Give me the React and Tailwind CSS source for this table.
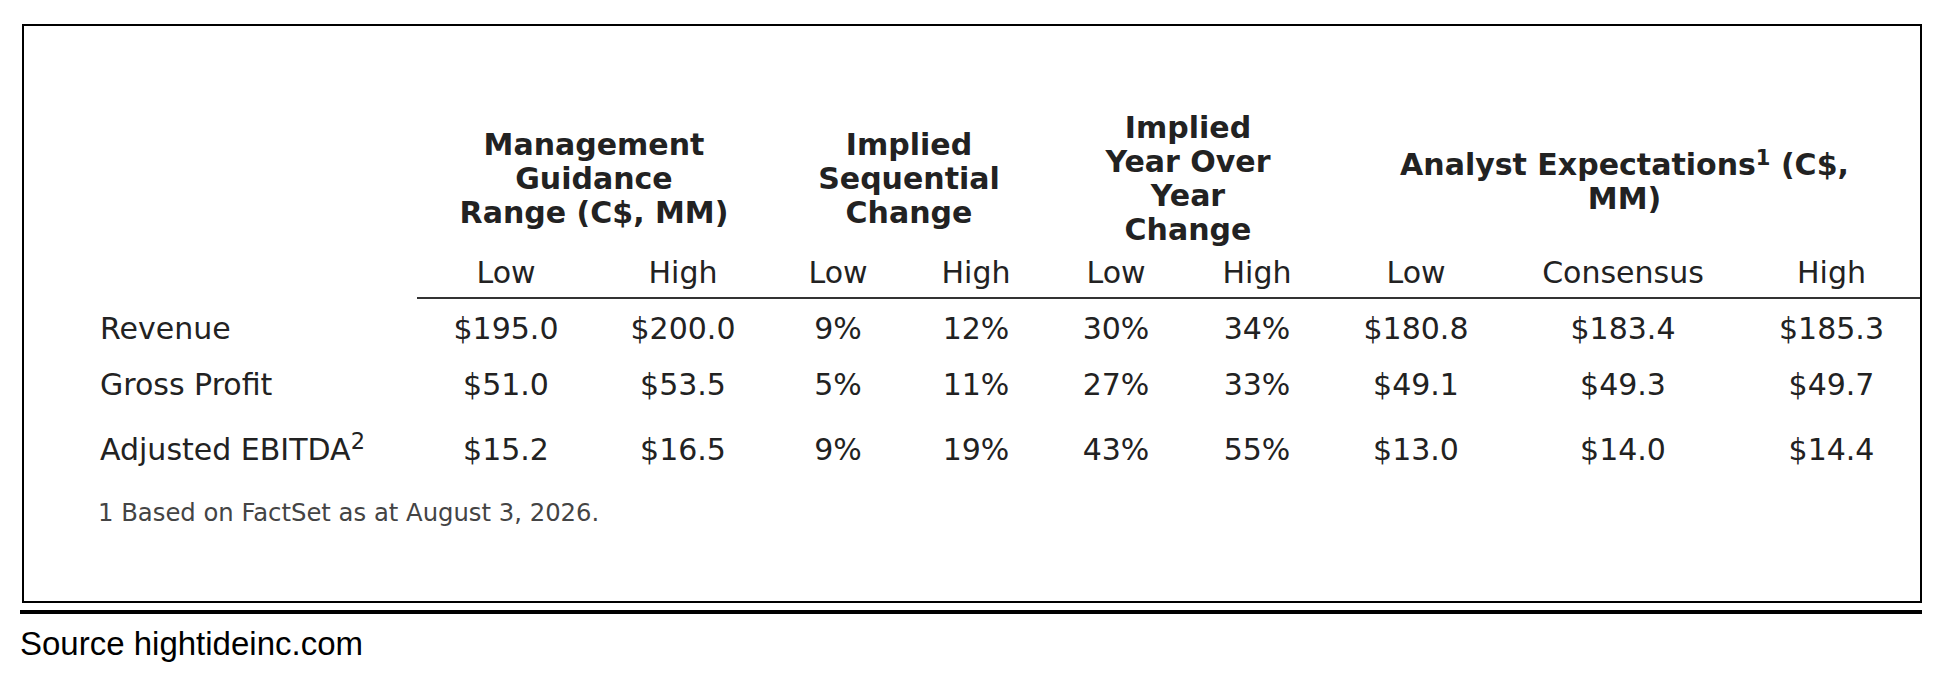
import React from 'react';

const groups = [
  { lines: ['Management', 'Guidance', 'Range (C$, MM)'], span: 'col-span-2' },
  { lines: ['Implied', 'Sequential', 'Change'], span: 'col-span-2' },
  { lines: ['Implied', 'Year Over', 'Year', 'Change'], span: 'col-span-2' },
];

const subHeads = ['Low', 'High', 'Low', 'High', 'Low', 'High', 'Low', 'Consensus', 'High'];

const rows = [
  { label: 'Revenue', values: ['$195.0', '$200.0', '9%', '12%', '30%', '34%', '$180.8', '$183.4', '$185.3'], pad: 'pt-[13px]' },
  { label: 'Gross Profit', values: ['$51.0', '$53.5', '5%', '11%', '27%', '33%', '$49.1', '$49.3', '$49.7'], pad: 'pt-[13px]' },
  { label: 'Adjusted EBITDA', sup: '2', values: ['$15.2', '$16.5', '9%', '19%', '43%', '55%', '$13.0', '$14.0', '$14.4'], pad: 'pt-[22px]' },
];

const App = () => {
  return (
    <div className="bg-white w-[1944px] h-[676px] pt-[24px] pl-[20px] text-[#222]">
      {/* Table card */}
      <div className="ml-[2px] w-[1900px] h-[579px] border-2 border-black font-['DejaVu_Sans',sans-serif]">
        <div className="pt-[84px] grid grid-cols-[393px_178px_176px_134px_142px_138px_144px_174px_240px_177px]">
          {/* group headings */}
          <div className="h-[138px]" />
          {groups.map((g, i) => (
            <div key={i} className={`${g.span} h-[138px] flex items-center justify-center`}>
              <div className="text-center font-bold text-[30px] leading-[34px] whitespace-nowrap">
                {g.lines.map((l, j) => (
                  <div key={j}>{l}</div>
                ))}
              </div>
            </div>
          ))}
          <div className="col-span-3 h-[138px] flex items-center justify-center">
            <div className="pt-[6px] text-center font-bold text-[30px] leading-[34px] whitespace-nowrap">
              <div>
                Analyst Expectations<sup className="text-[21px]">1</sup> (C$,
              </div>
              <div>MM)</div>
            </div>
          </div>

          {/* sub headings */}
          <div />
          {subHeads.map((s, i) => (
            <div
              key={i}
              className="pt-[8px] pb-[7px] text-center text-[30px] leading-[34px] border-b-2 border-[#333]"
            >
              {s}
            </div>
          ))}

          {/* data rows */}
          {rows.map((r) => (
            <React.Fragment key={r.label}>
              <div className={`${r.pad} pb-[9px] pl-[76px] text-[30px] leading-[34px] whitespace-nowrap`}>
                {r.label}
                {r.sup && <sup>{r.sup}</sup>}
              </div>
              {r.values.map((v, i) => (
                <div key={i} className={`${r.pad} pb-[9px] text-center text-[30px] leading-[34px]`}>
                  {v}
                </div>
              ))}
            </React.Fragment>
          ))}
        </div>
        <p className="mt-[23px] ml-[74px] text-[24.3px] leading-[28px] text-[#444]">
          1 Based on FactSet as at August 3, 2026.
        </p>
      </div>

      <div className="mt-[7px] w-[1902px] h-[4px] bg-black" />
      <p className="mt-[14px] font-['Liberation_Sans',Arial,sans-serif] text-[33px] leading-[32px] text-black">
        Source hightideinc.com
      </p>
    </div>
  );
};

export default App;
